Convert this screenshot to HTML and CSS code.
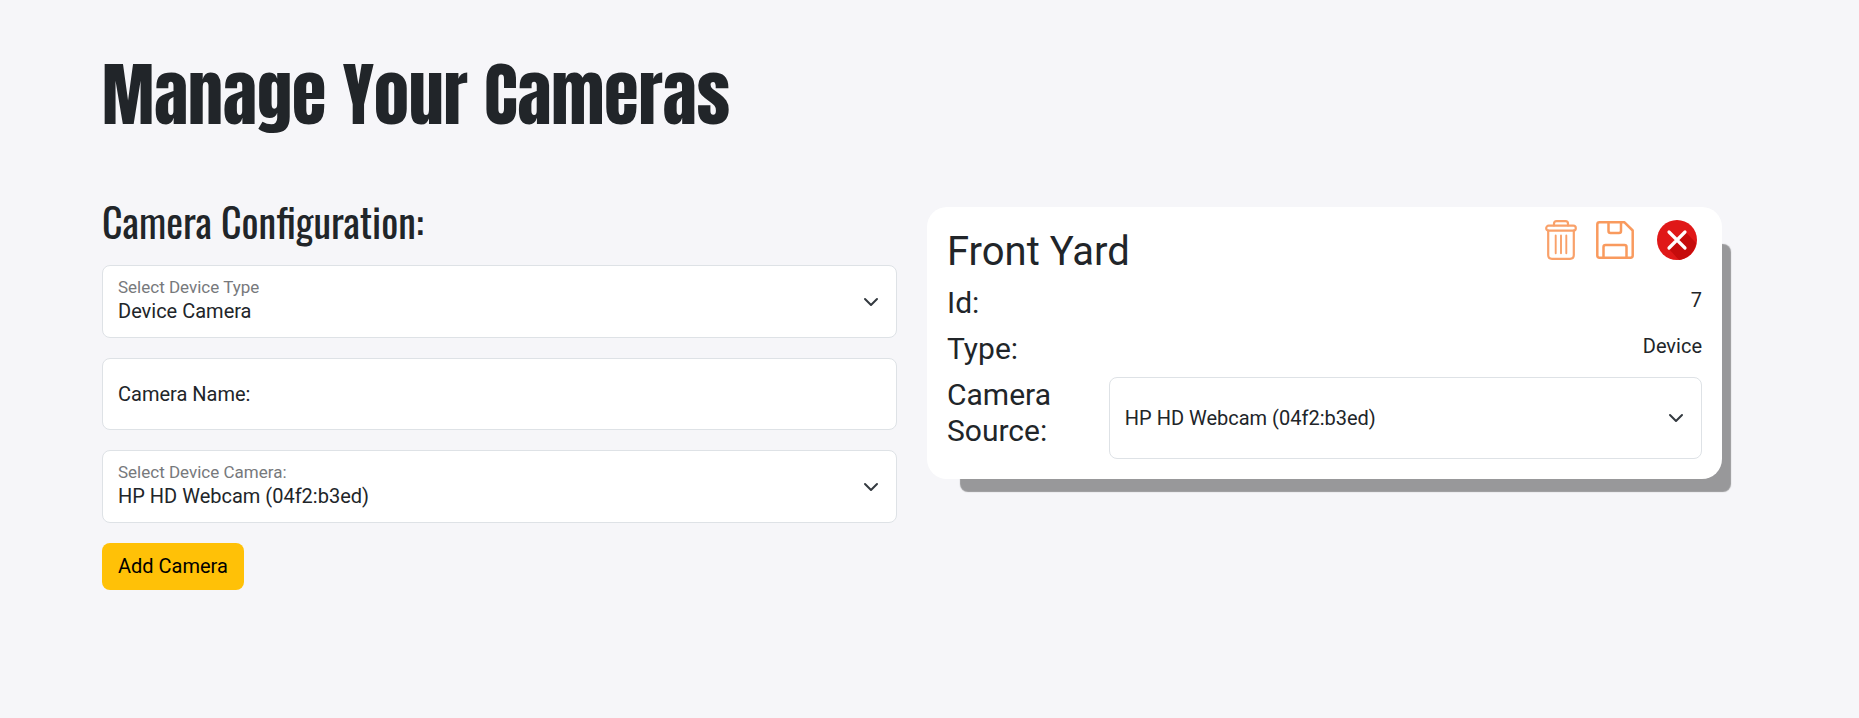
FILE: index.html
```html
<!DOCTYPE html>
<html lang="en">
<head>
<meta charset="utf-8">
<title>Manage Your Cameras</title>
<link rel="stylesheet" href="styles.css">
</head>
<body>
<main class="page">
  <h1 class="page-title">Manage Your Cameras</h1>
  <div class="columns">
    <form class="config">
      <h2 class="config-title">Camera Configuration:</h2>
      <div class="field">
        <select class="control select floating" id="device-type"><option>Device Camera</option></select>
        <label class="field-label small" for="device-type">Select Device Type</label>
      </div>
      <div class="field">
        <input class="control input" id="camera-name" type="text">
        <label class="field-label" for="camera-name">Camera Name:</label>
      </div>
      <div class="field">
        <select class="control select floating" id="device-camera"><option>HP HD Webcam (04f2:b3ed)</option></select>
        <label class="field-label small" for="device-camera">Select Device Camera:</label>
      </div>
      <button class="add-button" type="button">Add Camera</button>
    </form>
    <section class="card">
      <header class="card-header">
        <h3 class="card-title">Front Yard</h3>
        <div class="actions">
          <button class="icon-button trash" type="button" aria-label="Delete">
            <svg width="32" height="40" viewBox="0 0 32 40" fill="none" stroke="#f9a16a" stroke-width="2.200" stroke-linecap="round" stroke-linejoin="round">
              <path d="M9 5.500V3.700Q9 1.200 11.500 1.200H20.500Q23 1.200 23 3.700V5.500"/>
              <rect x="1.200" y="5.700" width="29.600" height="5" rx="2.500"/>
              <path d="M3.200 10.700V35Q3.200 38.800 7 38.800H25Q28.800 38.800 28.800 35V10.700"/>
              <path stroke-width="1.900" d="M10.700 15.500V33.300M16 15.500V33.300M21.300 15.500V33.300"/>
            </svg>
          </button>
          <button class="icon-button save" type="button" aria-label="Save">
            <svg width="38" height="38" viewBox="0 0 38 38" fill="none" stroke="#f99a5e" stroke-width="2.500" stroke-linejoin="round">
              <path d="M3.500 1.300H28.500L36.700 9.500V34.500Q36.700 36.700 34.500 36.700H3.500Q1.300 36.700 1.300 34.500V3.500Q1.300 1.300 3.500 1.300Z"/>
              <path d="M12.500 1V10Q12.500 12 14.500 12H23Q25 12 25 10V1M7.500 37V26Q7.500 24 9.500 24H28.500Q30.500 24 30.500 26V37"/>
            </svg>
          </button>
          <button class="icon-button" type="button" aria-label="Close">
            <svg width="40" height="40" viewBox="0 0 40 40">
              <circle cx="20" cy="20" r="20" fill="#e01818"/>
              <path d="M28.500 12L39.100 23A20 20 0 0 1 22 40L11.500 28.500L20 20Z" fill="#c60c0c"/>
              <path d="M12 12L28 28M28 12L12 28" stroke="#fff" stroke-width="3.200" stroke-linecap="round"/>
            </svg>
          </button>
        </div>
      </header>
      <div class="row"><h4 class="row-label">Id:</h4><p class="row-value">7</p></div>
      <div class="row"><h4 class="row-label">Type:</h4><p class="row-value">Device</p></div>
      <div class="row">
        <label class="row-label" for="camera-source">Camera Source:</label>
        <select class="control select source" id="camera-source"><option>HP HD Webcam (04f2:b3ed)</option></select>
      </div>
    </section>
  </div>
</main>
</body>
</html>
```
FILE: styles.css
```css
* { box-sizing: border-box; }
body {
  margin: 0;
  background: #f6f6f9;
  color: #212529;
  font: 20px/30px Roboto, "Liberation Sans", sans-serif;
}
h1, h2, h3, h4, p { margin: 0; font-weight: 400; }
.page { padding: 45px 137px 45px 102px; }
.page-title {
  font: 400 70px/100px Anton, "Liberation Sans Narrow", "DejaVu Sans Condensed", sans-serif;
}
.columns {
  display: grid;
  grid-template-columns: 1fr 1fr;
  gap: 30px;
  align-items: start;
  margin-top: 52px;
}
.config { display: flex; flex-direction: column; gap: 20px; align-items: stretch; }
.config-title {
  font: 400 40px/48px Oswald, "Liberation Sans Narrow", "DejaVu Sans Condensed", sans-serif;
}
.field { position: relative; display: flex; }
.control {
  width: 100%;
  height: 73px;
  padding: 0 15px;
  border: 1px solid #dee2e6;
  border-radius: 8px;
  background-color: #fff;
  color: #212529;
  font: inherit;
}
.input { height: 72px; }
.select {
  appearance: none;
  background-image: url("data:image/svg+xml,%3Csvg xmlns='http://www.w3.org/2000/svg' viewBox='0 0 16 16'%3E%3Cpath fill='none' stroke='%23343a40' stroke-linecap='round' stroke-linejoin='round' stroke-width='2' d='m2 5 6 6 6-6'/%3E%3C/svg%3E");
  background-repeat: no-repeat;
  background-position: right 17px center;
  background-size: 16px 16px;
}
.floating { padding-top: 18px; }
.field-label {
  position: absolute;
  top: 21px;
  left: 16px;
  pointer-events: none;
}
.small { top: 7px; color: #77797c; font-size: 17px; }
.add-button {
  align-self: flex-start;
  padding: 8px 16px;
  border: 0;
  border-radius: 8px;
  background: #ffc107;
  color: #000;
  font: inherit;
  line-height: 31px;
}
.card {
  margin-top: 10px;
  padding: 13px 20px 20px;
  border-radius: 20px;
  background: #fff;
  box-shadow: 21px 25px 1px -12px #98989a;
}
.card-header { display: flex; justify-content: space-between; align-items: flex-start; margin-bottom: 9px; }
.card-title { padding-top: 8px; font-size: 40px; line-height: 48px; }
.actions { display: flex; align-items: center; margin-right: 5px; }
.icon-button { padding: 0; border: 0; background: none; }
.icon-button svg { display: block; }
.trash { margin-right: 19px; }
.save { margin-right: 23px; }
.row { display: grid; grid-template-columns: 3fr 11fr; }
.row-label { margin-bottom: 10px; font-size: 30px; line-height: 36px; }
.row-value { text-align: right; }
.source { height: 82px; }
```
